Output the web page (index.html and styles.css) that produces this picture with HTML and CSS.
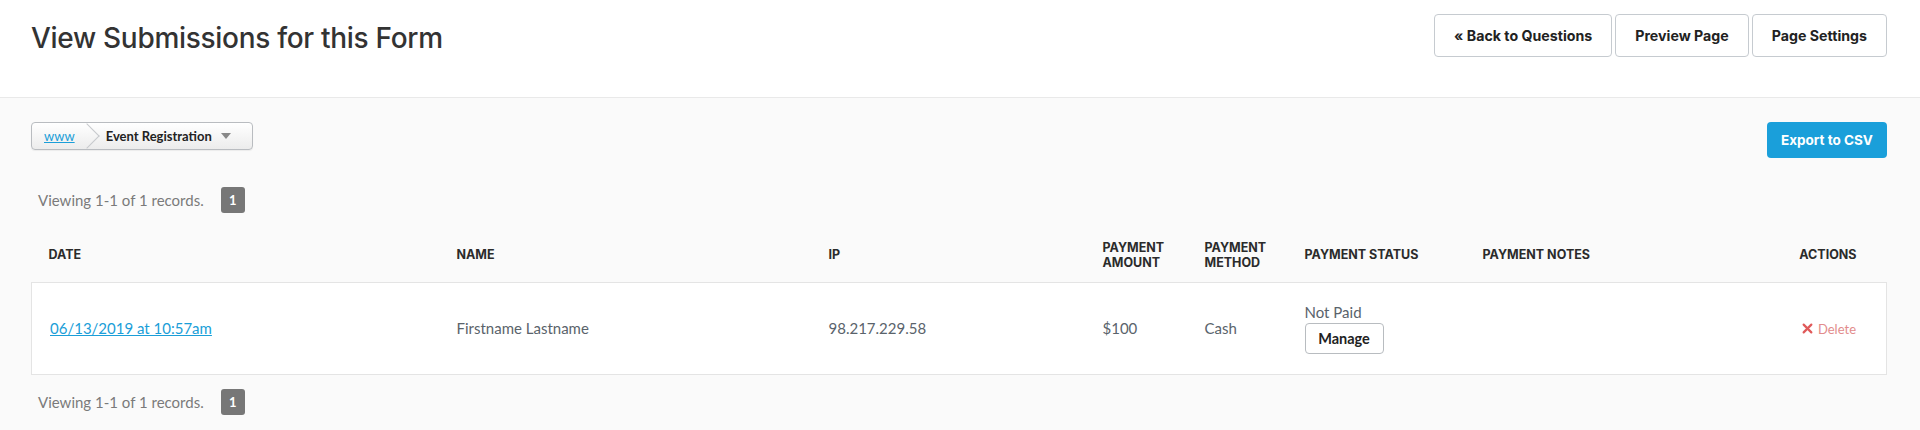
FILE: index.html
```html
<!DOCTYPE html>
<html lang="en">

<head>
    <meta charset="UTF-8">
    <meta name="viewport" content="width=device-width, initial-scale=1.0">
    <title>View Submissions</title>

    <link rel="stylesheet" href="styles.css">
</head>

<body>
    <header class="pageHeader">
        <h1>View Submissions for this Form</h1>
        <div class="headerActions">
            <a class="btn" href="#">&laquo; Back to Questions</a>
            <a class="btn" href="#">Preview Page</a>
            <a class="btn" href="#">Page Settings</a>
        </div>
    </header>

    <main class="content">
        <div class="toolbar">
            <div class="crumbs">
                <a class="crumbLink" href="#">www</a>
                <span class="crumbSep"></span>
                <span class="crumbCurrent">Event Registration</span>
                <span class="caret"></span>
            </div>
            <a class="btnPrimary" href="#">Export to CSV</a>
        </div>

        <div class="pager">
            <span>Viewing 1-1 of 1 records.</span>
            <span class="pageBadge">1</span>
        </div>

        <table class="subs">
            <colgroup>
                <col class="cDate">
                <col class="cName">
                <col class="cIp">
                <col class="cAmount">
                <col class="cMethod">
                <col class="cStatus">
                <col class="cNotes">
                <col class="cActions">
            </colgroup>
            <thead>
                <tr>
                    <th>Date</th>
                    <th>Name</th>
                    <th>IP</th>
                    <th>Payment<br>Amount</th>
                    <th>Payment<br>Method</th>
                    <th>Payment Status</th>
                    <th>Payment Notes</th>
                    <th class="right">Actions</th>
                </tr>
            </thead>
            <tbody>
                <tr>
                    <td><a class="dateLink" href="#">06/13/2019 at 10:57am</a></td>
                    <td>Firstname Lastname</td>
                    <td>98.217.229.58</td>
                    <td>$100</td>
                    <td>Cash</td>
                    <td class="status">
                        <div>Not Paid</div>
                        <a class="btnSmall" href="#">Manage</a>
                    </td>
                    <td></td>
                    <td class="right">
                        <a class="deleteLink" href="#">
                            <svg width="11" height="11" viewBox="0 0 10 10"><path d="M1.5 1.5 L8.5 8.5 M8.5 1.5 L1.5 8.5" stroke="#e05a5a" stroke-width="2" stroke-linecap="round"/></svg>
                            Delete
                        </a>
                    </td>
                </tr>
            </tbody>
        </table>

        <div class="pager bottom">
            <span>Viewing 1-1 of 1 records.</span>
            <span class="pageBadge">1</span>
        </div>
    </main>
</body>

</html>
```

FILE: styles.css
```css
*{
    margin: 0;
    padding: 0;
    box-sizing: border-box;
}

body{
    background-color: #fafafa;
    font-family: Lato, "Open Sans", sans-serif;
    color: #5a636b;
}

a{
    text-decoration: none;
}

.pageHeader{
    height: 98px;
    background-color: #fff;
    border-bottom: 1px solid #e9e9e9;
    padding: 14px 33px 0 31px;
    display: flex;
    justify-content: space-between;
    align-items: flex-start;
}

.pageHeader h1{
    font-family: Inter, sans-serif;
    font-weight: 500;
    font-size: 28px;
    line-height: 48px;
    color: #333;
    letter-spacing: -0.3px;
}

.headerActions{
    display: flex;
    gap: 3px;
}

.btn{
    display: flex;
    align-items: center;
    justify-content: center;
    height: 43px;
    padding: 0 19px;
    border: 1px solid #c6cbd0;
    border-radius: 4px;
    background-color: #fff;
    font-family: Inter, sans-serif;
    font-weight: 700;
    font-size: 14.2px;
    color: #222;
}

.content{
    padding: 24px 33px 0 31px;
}

.toolbar{
    display: flex;
    justify-content: space-between;
    align-items: flex-start;
}

.crumbs{
    display: flex;
    align-items: center;
    height: 28px;
    width: 222px;
    border: 1px solid #b9bcc0;
    border-radius: 4px;
    background: linear-gradient(#ffffff, #ececec);
    box-shadow: 0 1px 1px rgba(0, 0, 0, 0.06);
    overflow: hidden;
}

.crumbLink{
    font-size: 13px;
    color: #1a9ed8;
    text-decoration: underline;
    padding: 0 11px 0 12px;
}

.crumbSep{
    width: 18px;
    height: 18px;
    border-top: 1px solid #c7c9cc;
    border-right: 1px solid #c7c9cc;
    transform: rotate(45deg);
    margin-left: -8px;
    margin-right: 10px;
}

.crumbCurrent{
    font-size: 13px;
    font-weight: 700;
    color: #222;
}

.caret{
    margin-left: 9px;
    width: 0;
    height: 0;
    border-left: 5px solid transparent;
    border-right: 5px solid transparent;
    border-top: 6px solid #888;
}

.btnPrimary{
    display: flex;
    align-items: center;
    justify-content: center;
    width: 120px;
    height: 36px;
    border-radius: 4px;
    background-color: #1a9fda;
    color: #fff;
    font-family: Inter, sans-serif;
    font-weight: 700;
    font-size: 13.5px;
}

.pager{
    display: flex;
    align-items: center;
    margin-top: 29px;
    padding-left: 7px;
    font-size: 15px;
    color: #7a7a7a;
}

.pager.bottom{
    margin-top: 14px;
}

.pageBadge{
    display: flex;
    align-items: center;
    justify-content: center;
    width: 24px;
    height: 26px;
    margin-left: 17px;
    border-radius: 3px;
    background-color: #777;
    color: #fff;
    font-size: 13px;
    font-weight: 700;
}

.subs{
    width: 1855px;
    margin-top: 15px;
    border-collapse: collapse;
    table-layout: fixed;
}

.cDate{ width: 408px; }
.cName{ width: 372px; }
.cIp{ width: 274px; }
.cAmount{ width: 102px; }
.cMethod{ width: 100px; }
.cStatus{ width: 178px; }
.cNotes{ width: 234px; }
.cActions{ width: 187px; }

.subs th{
    height: 54px;
    padding: 0 0 0 17px;
    text-align: left;
    font-family: Inter, sans-serif;
    font-weight: 700;
    font-size: 12.5px;
    line-height: 15px;
    text-transform: uppercase;
    color: #2b2b2b;
}

.subs th.right,
.subs td.right{
    text-align: right;
    padding-right: 30px;
}

.subs tbody tr{
    background-color: #fff;
    border: 1px solid #e4e4e4;
}

.subs td{
    height: 92px;
    padding: 0 0 0 17px;
    font-size: 15px;
    color: #5a636b;
    vertical-align: middle;
}

.dateLink{
    color: #1a9ed8;
    text-decoration: underline;
    padding-left: 1px;
}

.status div{
    line-height: 18px;
}

.btnSmall{
    display: inline-flex;
    align-items: center;
    justify-content: center;
    width: 79px;
    height: 31px;
    margin-top: 2px;
    border: 1px solid #b8bcc0;
    border-radius: 4px;
    background-color: #fff;
    font-weight: 700;
    font-size: 14.5px;
    color: #222;
}

.deleteLink{
    display: inline-flex;
    align-items: center;
    gap: 5px;
    font-size: 13px;
    color: #e28c8c;
}
```
